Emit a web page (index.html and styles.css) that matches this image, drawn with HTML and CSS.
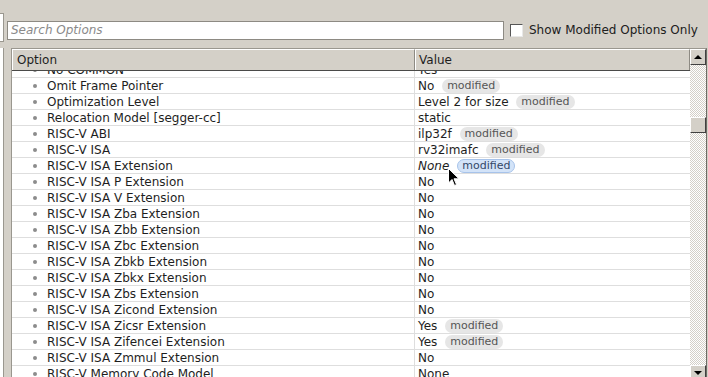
FILE: index.html
```html
<!DOCTYPE html>
<html lang="en">
<head>
    <meta charset="UTF-8">
    <title>Options</title>
    <link rel="stylesheet" href="styles.css">
</head>
<body>
    <div class="top">
        <div class="side-top"></div>
        <input class="search" type="text" placeholder="Search Options">
        <label class="only-mod"><span class="check"></span>Show Modified Options Only</label>
    </div>

    <div class="main">
        <div class="side"></div>
        <div class="frame">
            <div class="table">
                <div class="head">
                    <div class="hcell opt">Option</div>
                    <div class="hcell val">Value</div>
                </div>
                <div class="viewport">
                    <div class="rows">
                        <div class="row"><div class="c1"><i class="dot"></i>No COMMON</div><div class="c2">Yes</div></div>
                        <div class="row"><div class="c1"><i class="dot"></i>Omit Frame Pointer</div><div class="c2">No <span class="badge">modified</span></div></div>
                        <div class="row"><div class="c1"><i class="dot"></i>Optimization Level</div><div class="c2">Level 2 for size <span class="badge">modified</span></div></div>
                        <div class="row"><div class="c1"><i class="dot"></i>Relocation Model [segger-cc]</div><div class="c2">static</div></div>
                        <div class="row"><div class="c1"><i class="dot"></i>RISC-V ABI</div><div class="c2">ilp32f <span class="badge">modified</span></div></div>
                        <div class="row"><div class="c1"><i class="dot"></i>RISC-V ISA</div><div class="c2">rv32imafc <span class="badge">modified</span></div></div>
                        <div class="row"><div class="c1"><i class="dot"></i>RISC-V ISA Extension</div><div class="c2"><em>None</em> <span class="badge sel">modified</span></div></div>
                        <div class="row"><div class="c1"><i class="dot"></i>RISC-V ISA P Extension</div><div class="c2">No</div></div>
                        <div class="row"><div class="c1"><i class="dot"></i>RISC-V ISA V Extension</div><div class="c2">No</div></div>
                        <div class="row"><div class="c1"><i class="dot"></i>RISC-V ISA Zba Extension</div><div class="c2">No</div></div>
                        <div class="row"><div class="c1"><i class="dot"></i>RISC-V ISA Zbb Extension</div><div class="c2">No</div></div>
                        <div class="row"><div class="c1"><i class="dot"></i>RISC-V ISA Zbc Extension</div><div class="c2">No</div></div>
                        <div class="row"><div class="c1"><i class="dot"></i>RISC-V ISA Zbkb Extension</div><div class="c2">No</div></div>
                        <div class="row"><div class="c1"><i class="dot"></i>RISC-V ISA Zbkx Extension</div><div class="c2">No</div></div>
                        <div class="row"><div class="c1"><i class="dot"></i>RISC-V ISA Zbs Extension</div><div class="c2">No</div></div>
                        <div class="row"><div class="c1"><i class="dot"></i>RISC-V ISA Zicond Extension</div><div class="c2">No</div></div>
                        <div class="row"><div class="c1"><i class="dot"></i>RISC-V ISA Zicsr Extension</div><div class="c2">Yes <span class="badge">modified</span></div></div>
                        <div class="row"><div class="c1"><i class="dot"></i>RISC-V ISA Zifencei Extension</div><div class="c2">Yes <span class="badge">modified</span></div></div>
                        <div class="row"><div class="c1"><i class="dot"></i>RISC-V ISA Zmmul Extension</div><div class="c2">No</div></div>
                        <div class="row"><div class="c1"><i class="dot"></i>RISC-V Memory Code Model</div><div class="c2">None</div></div>
                    </div>
                </div>
            </div>
            <div class="scrollbar">
                <div class="sbtn"><span class="arrow up"></span></div>
                <div class="track">
                    <div class="thumb"></div>
                </div>
                <div class="sbtn"><span class="arrow down"></span></div>
            </div>
        </div>
    </div>

    <!-- mouse pointer over the table -->
    <svg class="pointer" width="13" height="20" viewBox="0 0 13 20">
        <path d="M0.5 0.5 L0.5 15 L4 11.5 L6.5 17.5 L8.5 16.6 L6 10.8 L11 10.8 Z" fill="#000" stroke="#fff" stroke-width="1"/>
    </svg>
</body>
</html>
```

FILE: styles.css
```css
body {
    margin: 0;
    background: #d4d0c8;
    font-family: "DejaVu Sans", sans-serif;
    font-size: 12px;
    color: #1e1e1e;
    height: 377px;
    overflow: hidden;
}

.top {
    display: flex;
    align-items: center;
    height: 48px;
    padding-top: 12px;
    box-sizing: border-box;
}

.side-top {
    width: 3px;
    height: 27px;
    background: #fff;
    border: 1px solid #9a978f;
    border-left: none;
    margin-right: 3px;
    margin-top: -6px;
}

.search {
    width: 497px;
    height: 19px;
    box-sizing: border-box;
    border: 1px solid #8d8a83;
    background: #fff;
    padding: 0 3px;
    font-family: "DejaVu Sans", sans-serif;
    font-size: 12px;
    outline: none;
}

.search::placeholder {
    color: #8a8a8a;
    font-style: italic;
}

.only-mod {
    display: flex;
    align-items: center;
    margin-left: 6px;
    color: #202020;
}

.check {
    width: 11px;
    height: 11px;
    background: #fff;
    border: 1px solid #555;
    border-right-color: #e8e8e8;
    border-bottom-color: #e8e8e8;
    margin-right: 6px;
}

.main {
    display: flex;
    height: 333px;
}

.side {
    width: 3px;
    background: #fff;
    border-right: 1px solid #9a978f;
    margin-right: 7px;
}

.frame {
    display: flex;
    width: 694px;
    border-top: 1px solid #9a978f;
    border-left: 1px solid #9a978f;
    border-right: 1px solid #6e6b64;
    background: #fff;
}

.table {
    flex: 1;
    display: flex;
    flex-direction: column;
    overflow: hidden;
}

.head {
    display: flex;
    height: 22px;
    background: #d4d0c8;
    border-bottom: 1px solid #4a4a48;
    box-sizing: border-box;
}

.hcell {
    display: flex;
    align-items: center;
    padding-left: 4px;
    border-top: 1px solid #fff;
    border-left: 1px solid #fff;
    border-right: 1px solid #8d8a83;
    box-sizing: border-box;
}

.opt {
    width: 403px;
}

.val {
    flex: 1;
    padding-left: 3px;
}

.viewport {
    flex: 1;
    overflow: hidden;
}

.rows {
    margin-top: -9px;
}

.row {
    display: flex;
    height: 16px;
    border-bottom: 1px solid #dedede;
    box-sizing: border-box;
}

.c1 {
    width: 403px;
    display: flex;
    align-items: center;
    padding-left: 21px;
    border-right: 1px solid #dedede;
    box-sizing: border-box;
}

.dot {
    width: 4px;
    height: 4px;
    border-radius: 50%;
    background: #8c8c8c;
    margin-right: 10px;
}

.c2 {
    flex: 1;
    display: flex;
    align-items: center;
    padding-left: 3px;
    white-space: pre;
}

.badge {
    display: inline-block;
    margin-left: 4px;
    padding: 0 5px;
    height: 14px;
    line-height: 14px;
    border-radius: 7px;
    background: #e6e6e6;
    color: #555;
    font-size: 11px;
}

.badge.sel {
    margin-left: 8px;
    padding: 0 4px;
    background: #d3e3f8;
    border: 1px solid #a7c3ea;
    color: #344767;
    height: 12px;
    line-height: 12px;
}

.scrollbar {
    width: 16px;
    display: flex;
    flex-direction: column;
}

.sbtn {
    height: 16px;
    background: #d4d0c8;
    border: 1px solid;
    border-color: #fff #404040 #404040 #fff;
    box-sizing: border-box;
    display: flex;
    align-items: center;
    justify-content: center;
}

.arrow {
    width: 0;
    height: 0;
    border-left: 4px solid transparent;
    border-right: 4px solid transparent;
}

.arrow.up {
    border-bottom: 4px solid #000;
}

.arrow.down {
    border-top: 4px solid #000;
}

.track {
    flex: 1;
    background-color: #ebe9e5;
    background-image: repeating-conic-gradient(#d4d0c8 0 25%, #fff 0 50%);
    background-size: 2px 2px;
    padding-top: 52px;
}

.thumb {
    height: 16px;
    background: #d4d0c8;
    border: 1px solid;
    border-color: #fff #404040 #404040 #fff;
    box-sizing: border-box;
}

.pointer {
    position: absolute;
    left: 448px;
    top: 168px;
}
```
